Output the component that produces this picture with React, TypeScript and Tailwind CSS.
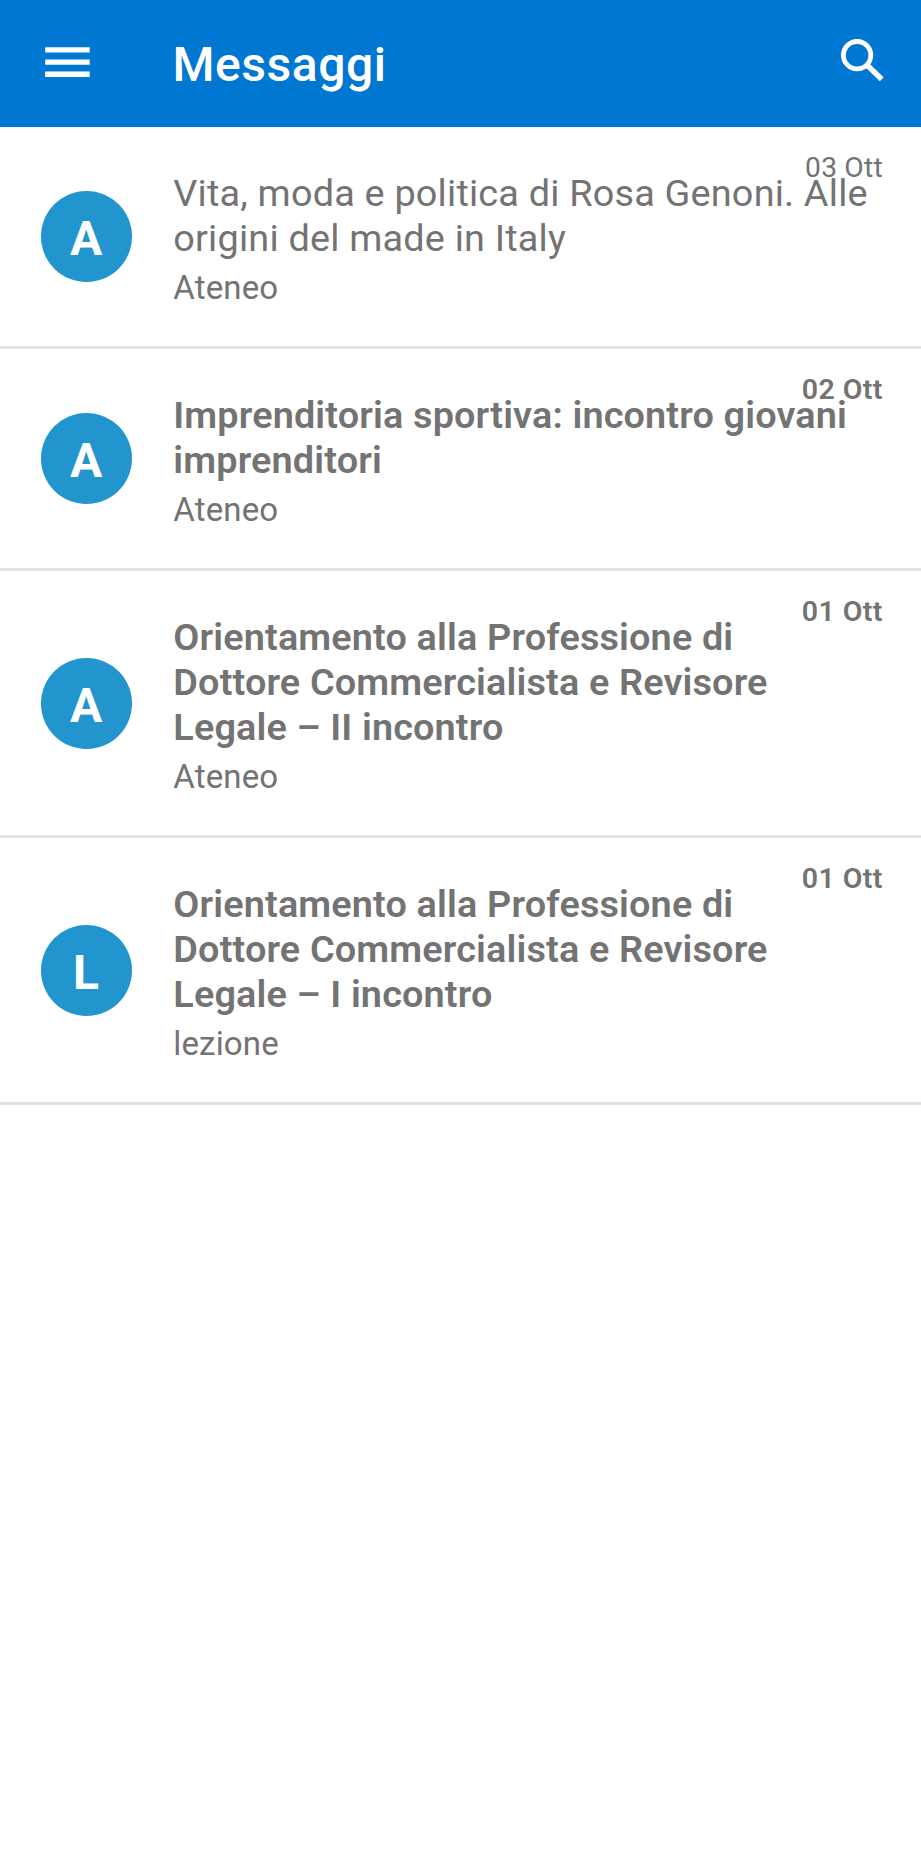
import React from "react";

type Message = { initial: string; lines: string[]; sender: string; date: string; read?: boolean };

const messages: Message[] = [
  { initial: "A", lines: ["Vita, moda e politica di Rosa Genoni. Alle", "origini del made in Italy"], sender: "Ateneo", date: "03 Ott", read: true },
  { initial: "A", lines: ["Imprenditoria sportiva: incontro giovani", "imprenditori"], sender: "Ateneo", date: "02 Ott" },
  { initial: "A", lines: ["Orientamento alla Professione di", "Dottore Commercialista e Revisore", "Legale – II incontro"], sender: "Ateneo", date: "01 Ott" },
  { initial: "L", lines: ["Orientamento alla Professione di", "Dottore Commercialista e Revisore", "Legale – I incontro"], sender: "lezione", date: "01 Ott" },
];

function MessageRow({ message }: { message: Message }) {
  const dateStyle = message.read
    ? "font-normal text-[28.2px] tracking-[0.2px]"
    : "font-semibold text-[28.5px] tracking-[0.45px]";
  return (
    <li className="relative flex items-center border-b-3 border-[#e2e2e2] pl-[41px]">
      <div className="flex size-[91px] shrink-0 items-center justify-center rounded-full bg-[#2294ce] pt-[5px] pr-px text-[48px] font-bold leading-none text-white">
        {message.initial}
      </div>
      <div className="ml-[41.3px] pt-[44px] pb-[37px] whitespace-nowrap">
        <h2 className={`text-[37.8px] leading-[45px] ${message.read ? "font-normal tracking-[0.21px]" : "font-semibold tracking-[0.16px]"}`}>
          {message.lines.map((line) => (
            <span key={line} className="block">{line}</span>
          ))}
        </h2>
        <p className="mt-[6px] text-[33px] leading-[42px] tracking-[0.15px]">{message.sender}</p>
      </div>
      <time className={`absolute top-[22.6px] right-[38.2px] leading-[36px] ${dateStyle}`}>{message.date}</time>
    </li>
  );
}

export default function App() {
  return (
    <div className="min-h-screen bg-white font-[Roboto,sans-serif] text-[#737373]">
      <header className="flex h-[127px] items-center bg-[#0077d0] text-white">
        <button aria-label="Menu" className="mb-[3px] ml-[45px] flex">
          <svg className="h-[30px] w-[45px]" viewBox="0 0 45 30" fill="currentColor">
            <path d="M.2.2h44.5v5.4H.2zM.2 12.4h44.5v5.4H.2zM.2 24.6h44.5V30H.2z" />
          </svg>
        </button>
        <h1 className="ml-[82.5px] pt-[2px] text-[48px] font-medium leading-none tracking-[0.55px]">Messaggi</h1>
        <button aria-label="Cerca" className="mr-[37px] mb-[6px] ml-auto flex">
          <svg className="size-[43px]" viewBox="0 0 43 43" fill="none" stroke="currentColor">
            <circle cx="16.1" cy="16.2" r="13.7" strokeWidth="4.8" />
            <path d="M26.5 26.5 40.7 40.3" strokeWidth="5.4" />
          </svg>
        </button>
      </header>
      <ul>
        {messages.map((message, index) => (
          <MessageRow key={index} message={message} />
        ))}
      </ul>
    </div>
  );
}
